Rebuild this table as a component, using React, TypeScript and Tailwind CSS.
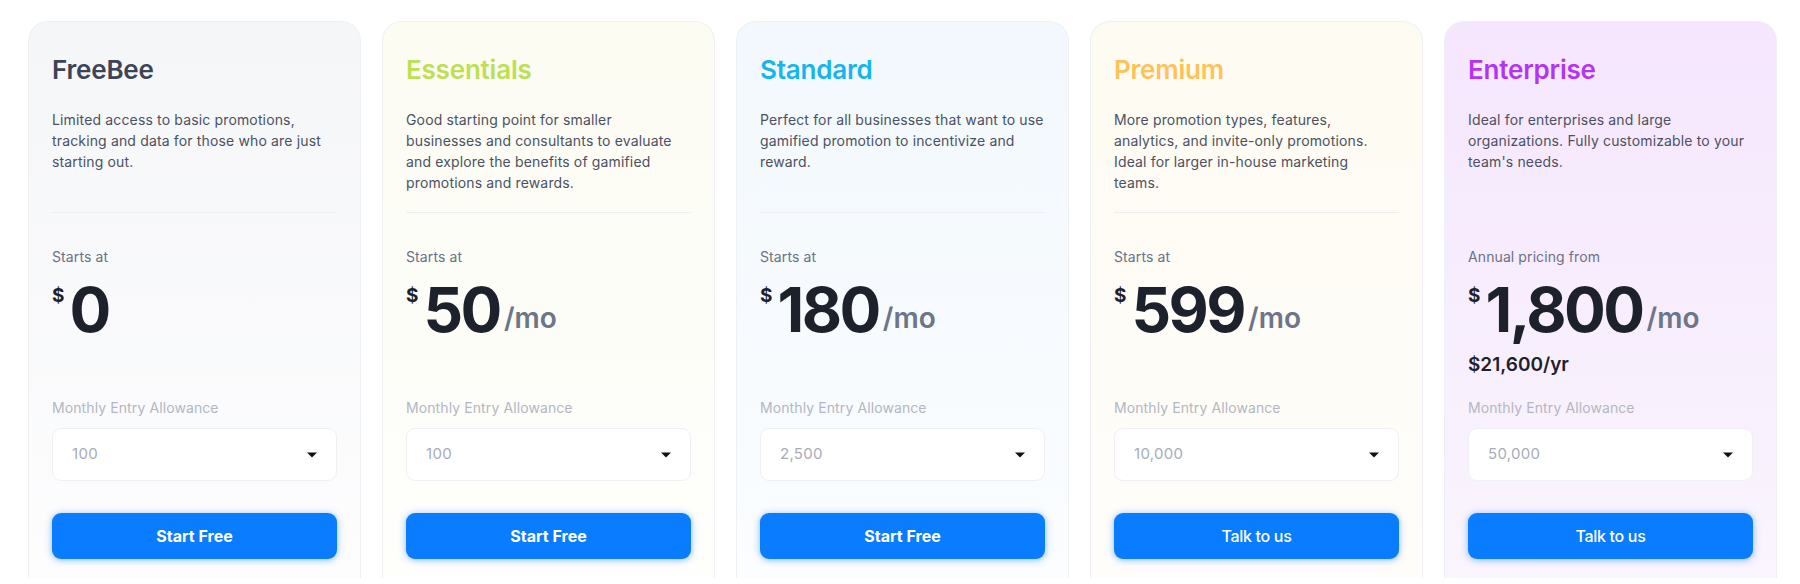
import React from 'react';

interface Plan {
  name: string;
  nameColor: string;
  bg: string;
  description: string[];
  priceLabel: string;
  price: string;
  perMonth: boolean;
  yearly?: string;
  allowance: string;
  cta: string;
  divider: boolean;
}

// description lines are kept as they break in the design
const plans: Plan[] = [
  {
    name: 'FreeBee',
    nameColor: 'text-[#3d4457]',
    bg: 'bg-gradient-to-b from-[#f5f6f8] to-[#fdfdfe]',
    description: ['Limited access to basic promotions,', 'tracking and data for those who are just', 'starting out.'],
    priceLabel: 'Starts at',
    price: '0',
    perMonth: false,
    allowance: '100',
    cta: 'Start Free',
    divider: true,
  },
  {
    name: 'Essentials',
    nameColor: 'text-[#bde052]',
    bg: 'bg-gradient-to-b from-[#fcfcf3] to-[#fefefc]',
    description: [
      'Good starting point for smaller',
      'businesses and consultants to evaluate',
      'and explore the benefits of gamified',
      'promotions and rewards.',
    ],
    priceLabel: 'Starts at',
    price: '50',
    perMonth: true,
    allowance: '100',
    cta: 'Start Free',
    divider: true,
  },
  {
    name: 'Standard',
    nameColor: 'text-[#16b5ec]',
    bg: 'bg-gradient-to-b from-[#f2f8fd] to-[#fbfdff]',
    description: ['Perfect for all businesses that want to use', 'gamified promotion to incentivize and', 'reward.'],
    priceLabel: 'Starts at',
    price: '180',
    perMonth: true,
    allowance: '2,500',
    cta: 'Start Free',
    divider: true,
  },
  {
    name: 'Premium',
    nameColor: 'text-[#ffc258]',
    bg: 'bg-gradient-to-b from-[#fefbf2] to-[#fefdfa]',
    description: [
      'More promotion types, features,',
      'analytics, and invite-only promotions.',
      'Ideal for larger in-house marketing',
      'teams.',
    ],
    priceLabel: 'Starts at',
    price: '599',
    perMonth: true,
    allowance: '10,000',
    cta: 'Talk to us',
    divider: true,
  },
  {
    name: 'Enterprise',
    nameColor: 'text-[#b434f5]',
    bg: 'bg-gradient-to-b from-[#f5e6fd] to-[#faf5fe]',
    description: ['Ideal for enterprises and large', 'organizations. Fully customizable to your', "team's needs."],
    priceLabel: 'Annual pricing from',
    price: '1,800',
    perMonth: true,
    yearly: '$21,600/yr',
    allowance: '50,000',
    cta: 'Talk to us',
    divider: false,
  },
];

function Caret() {
  return (
    <svg width="10" height="6" viewBox="0 0 10 6" className="shrink-0">
      <path d="M0 0.5 L10 0.5 L5 5.5 Z" fill="#111" />
    </svg>
  );
}

function PlanCard({ plan }: { plan: Plan }) {
  const talk = plan.cta === 'Talk to us';
  return (
    <div className={`w-[333px] h-[557px] shrink-0 rounded-t-[20px] border-x border-t border-[#eef0f3] px-[23px] pt-[32px] ${plan.bg}`}>
      <h2 className={`text-[26px] leading-[32px] font-semibold tracking-[-0.2px] ${plan.nameColor}`}>{plan.name}</h2>

      <p className="mt-[23px] h-[84px] text-[14px] leading-[21px] text-[#4b5162] tracking-[0.15px] whitespace-nowrap">
        {plan.description.map((line, i) => (
          <span key={i} className="block">{line}</span>
        ))}
      </p>

      <div className={`mt-[19px] border-t ${plan.divider ? 'border-[#eceef1]' : 'border-transparent'}`} />

      {/* Price block */}
      <div className="mt-[34px] h-[151px]">
        <div className="text-[14px] leading-[20px] text-[#6b7183] tracking-[0.1px]">{plan.priceLabel}</div>
        <div className="mt-[12px] flex items-end text-[#1d212b]">
          <span className="self-start mt-[7px] mr-[5px] text-[19px] leading-none font-bold">$</span>
          <span className="text-[62px] leading-none font-bold tracking-[-2.5px]">{plan.price}</span>
          {plan.perMonth && (
            <span className="ml-[4px] mb-[9px] text-[28px] leading-none font-semibold text-[#6c7589]">/mo</span>
          )}
        </div>
        {plan.yearly && (
          <div className="mt-[10px] text-[19px] leading-[28px] font-semibold text-[#1d212b]">{plan.yearly}</div>
        )}
      </div>

      <div className="text-[14px] leading-[20px] text-[#b3b7c2] tracking-[0.1px]">Monthly Entry Allowance</div>

      <div className="mt-[10px] h-[53px] flex items-center justify-between rounded-[9px] border border-[#eef0f3] bg-white pl-[19px] pr-[19px]">
        <span className="text-[15px] text-[#a7acb7] tracking-[0.3px]">{plan.allowance}</span>
        <Caret />
      </div>

      <button
        className={`mt-[32px] w-full h-[46px] rounded-[9px] bg-[#0a7cff] text-white text-[16px] shadow-[0_1px_7px_rgba(10,124,255,0.5)] ${talk ? 'font-medium tracking-[-0.3px]' : 'font-bold'}`}
      >
        {plan.cta}
      </button>
    </div>
  );
}

export default function App() {
  return (
    <div className="w-[1800px] h-[584px] bg-white overflow-hidden" style={{ fontFamily: 'Inter, "Open Sans", sans-serif' }}>
      <div className="flex gap-[21px] pl-[28px] pt-[21px]">
        {plans.map((p) => (
          <PlanCard key={p.name} plan={p} />
        ))}
      </div>
    </div>
  );
}
